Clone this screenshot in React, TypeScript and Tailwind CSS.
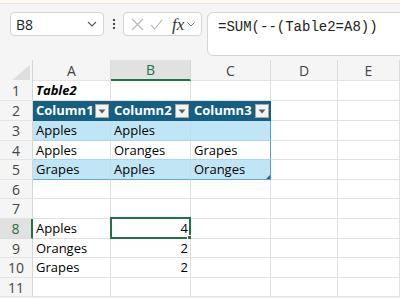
import React from "react";

const font = { fontFamily: '"Open Sans", "Liberation Sans", Arial, sans-serif' };

const rowHeights = ["h-[20px]", "h-[20px]", "h-[20px]", "h-[19px]", "h-[20px]", "h-[19px]", "h-[20px]", "h-[20px]", "h-[19px]", "h-[20px]", "h-[19px]"];

function FilterBtn() {
  return (
    <div className="absolute right-[1px] top-[3px] w-[14px] h-[14px] bg-[#f3f3f3] border border-[#a8a8a8] flex items-center justify-center">
      <svg width="8" height="5" viewBox="0 0 8 5">
        <polygon points="0.5,0.5 7.5,0.5 4,4.5" fill="#5a5a5a" />
      </svg>
    </div>
  );
}

type Cell = { text?: string; bold?: boolean; italic?: boolean; right?: boolean; filter?: boolean };

export default function App() {
  const cols = ["A", "B", "C", "D", "E"];
  const data: Cell[][] = [
    [{ text: "Table2", bold: true, italic: true }, {}, {}, {}, {}],
    [{ text: "Column1", filter: true }, { text: "Column2", filter: true }, { text: "Column3", filter: true }, {}, {}],
    [{ text: "Apples" }, { text: "Apples" }, {}, {}, {}],
    [{ text: "Apples" }, { text: "Oranges" }, { text: "Grapes" }, {}, {}],
    [{ text: "Grapes" }, { text: "Apples" }, { text: "Oranges" }, {}, {}],
    [{}, {}, {}, {}, {}],
    [{}, {}, {}, {}, {}],
    [{ text: "Apples" }, { text: "4", right: true }, {}, {}, {}],
    [{ text: "Oranges" }, { text: "2", right: true }, {}, {}, {}],
    [{ text: "Grapes" }, { text: "2", right: true }, {}, {}, {}],
    [{}, {}, {}, {}, {}],
  ];

  return (
    <div className="w-[400px] h-[298px] overflow-hidden bg-[#f5f5f5] relative" style={font}>
      {/* top strip */}
      <div className="h-[4px] bg-[#fcfaf1] border-b border-[#e8e6df]" />
      {/* toolbar */}
      <div className="flex items-start pt-[8px] pl-[10px] h-[56px]">
        <div className="w-[94px] h-[24px] bg-white border border-[#d4d4d4] rounded-[4px] flex items-center justify-between pl-[5px] pr-[6px]">
          <span className="text-[14px] text-[#222]">B8</span>
          <svg width="10" height="6" viewBox="0 0 10 6">
            <polyline points="1,1 5,5 9,1" fill="none" stroke="#555" strokeWidth="1.1" />
          </svg>
        </div>
        <div className="w-[19px] h-[24px] flex flex-col items-center justify-center gap-[2px]">
          <div className="w-[2px] h-[2px] bg-[#444]" />
          <div className="w-[2px] h-[2px] bg-[#444]" />
          <div className="w-[2px] h-[2px] bg-[#444]" />
        </div>
        <div className="w-[79px] h-[24px] bg-white border border-[#d4d4d4] rounded-[4px] flex items-center pl-[7px]">
          <svg width="13" height="13" viewBox="0 0 13 13">
            <path d="M1 1 L12 12 M12 1 L1 12" stroke="#b5b5b5" strokeWidth="1.1" fill="none" />
          </svg>
          <svg className="ml-[6px]" width="13" height="13" viewBox="0 0 13 13">
            <polyline points="1,7 4.5,11 12,2" stroke="#b5b5b5" strokeWidth="1.1" fill="none" />
          </svg>
          <span className="ml-[9px] text-[17px] italic text-[#333] leading-none" style={{ fontFamily: '"Liberation Serif", "Times New Roman", serif' }}>fx</span>
          <svg className="ml-[3px]" width="8" height="5" viewBox="0 0 8 5">
            <polyline points="0.5,0.5 4,4 7.5,0.5" fill="none" stroke="#777" strokeWidth="1" />
          </svg>
        </div>
        <div className="ml-[5px] flex-1 -mr-[4px] h-[44px] bg-white border border-[#d4d4d4] rounded-tl-[6px] rounded-bl-[6px] pl-[10px] pt-0">
          <span className="text-[14px] text-[#222] leading-[22px]" style={{ fontFamily: '"Liberation Mono", "Courier New", monospace' }}>=SUM(--(Table2=A8))</span>
        </div>
      </div>

      {/* grid */}
      <div className="grid grid-cols-[33px_78px_80px_80px_67px_1fr]">
        {/* header row */}
        <div className="h-[21px] bg-[#f5f5f5] border-r border-[#d6d6d6] relative">
          <svg className="absolute left-[12px] top-[5px]" width="18" height="15" viewBox="0 0 18 15">
            <polygon points="18,0 18,15 0,15" fill="#dedede" />
          </svg>
        </div>
        {cols.map((c) => (
          <div
            key={c}
            className={
              c === "B"
                ? "h-[21px] bg-[#e1e1e1] border-b-2 border-[#217346] flex items-center justify-center text-[14px] text-[#217346] border-r border-r-[#d6d6d6]"
                : "h-[21px] bg-[#f5f5f5] border-r border-[#dcdcdc] border-b border-b-[#e4e4e4] flex items-center justify-center text-[14px] text-[#444]"
            }
          >
            {c}
          </div>
        ))}

        {data.map((row, ri) => {
          const r = ri + 1;
          const h = rowHeights[ri];
          const isHeader = r === 2;
          const isBand = r === 3 || r === 5;
          const inTableRow = r >= 2 && r <= 5;
          return (
            <React.Fragment key={r}>
              <div
                className={
                  r === 8
                    ? `${h} bg-[#e1e1e1] border-r-2 border-r-[#217346] border-b border-b-[#dcdcdc] flex items-center justify-center text-[14px] text-[#217346]`
                    : `${h} bg-[#f5f5f5] border-r border-r-[#d6d6d6] border-b border-b-[#e4e4e4] flex items-center justify-center text-[14px] text-[#444]`
                }
              >
                {r}
              </div>
              {row.map((cell, ci) => {
                const inTable = inTableRow && ci <= 2;
                let cls = `${h} relative flex items-center px-[3px] text-[13px] whitespace-nowrap overflow-visible border-r border-b `;
                if (inTable) {
                  if (isHeader) cls += "bg-[#156082] text-white font-bold border-b-[#156082] ";
                  else if (isBand) cls += "bg-[#c0e6f5] text-black ";
                  else cls += "bg-white text-black ";
                  if (!isHeader) cls += r === 5 ? "border-b-[#61a9d6] " : "border-b-[#a9d8ee] ";
                  if (ci === 2) cls += isHeader ? "border-r-[#156082] " : "border-r-[#4d9fd0] ";
                  else cls += isHeader ? "border-r-[#156082] " : isBand ? "border-r-[#b9e0f1] " : "border-r-[#e1e1e1] ";
                } else {
                  cls += "bg-white text-black border-r-[#e1e1e1] border-b-[#e1e1e1] ";
                }
                if (cell.right) cls += "justify-end pr-[2px] ";
                if (cell.bold) cls += "font-bold ";
                if (cell.italic) cls += "italic ";
                const isSel = r === 8 && ci === 1;
                return (
                  <div key={ci} className={cls}>
                    <span className="relative leading-none">{cell.text}</span>
                    {cell.filter && <FilterBtn />}
                    {r === 5 && ci === 2 && (
                      <svg className="absolute right-0 bottom-0" width="4" height="4" viewBox="0 0 4 4">
                        <polygon points="4,0 4,4 0,4" fill="#2a5d9a" />
                      </svg>
                    )}
                    {isSel && (
                      <>
                        <div className="absolute -left-[1px] -top-[2px] -right-[1px] -bottom-[1px] border-2 border-[#217346] pointer-events-none" />
                        <div className="absolute -right-[3px] -bottom-[3px] w-[6px] h-[6px] bg-[#217346] border border-white" />
                      </>
                    )}
                  </div>
                );
              })}
            </React.Fragment>
          );
        })}
      </div>
    </div>
  );
}
